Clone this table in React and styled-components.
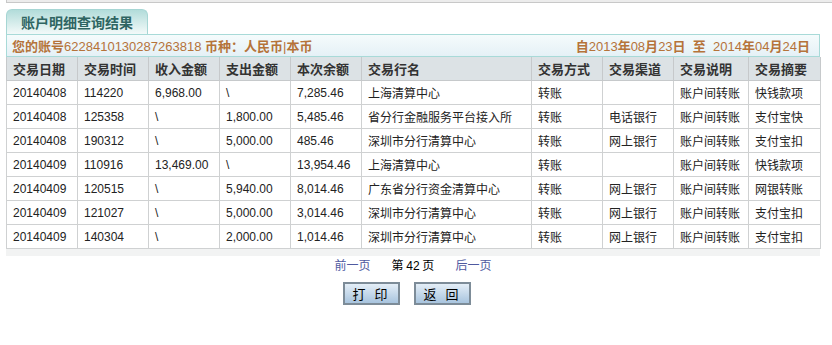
import React from "react";
import styled, { createGlobalStyle } from "styled-components";

const GlobalStyle = createGlobalStyle`
  body {
    margin: 0;
    background: #fff;
    font-family: "Liberation Sans", "Noto Sans CJK SC", sans-serif;
    font-size: 12px;
    color: #222;
  }
`;

const rows = [
  ["20140408", "114220", "6,968.00", "\\", "7,285.46", "上海清算中心", "转账", "", "账户间转账", "快钱款项"],
  ["20140408", "125358", "\\", "1,800.00", "5,485.46", "省分行金融服务平台接入所", "转账", "电话银行", "账户间转账", "支付宝快"],
  ["20140408", "190312", "\\", "5,000.00", "485.46", "深圳市分行清算中心", "转账", "网上银行", "账户间转账", "支付宝扣"],
  ["20140409", "110916", "13,469.00", "\\", "13,954.46", "上海清算中心", "转账", "", "账户间转账", "快钱款项"],
  ["20140409", "120515", "\\", "5,940.00", "8,014.46", "广东省分行资金清算中心", "转账", "网上银行", "账户间转账", "网银转账"],
  ["20140409", "121027", "\\", "5,000.00", "3,014.46", "深圳市分行清算中心", "转账", "网上银行", "账户间转账", "支付宝扣"],
  ["20140409", "140304", "\\", "2,000.00", "1,014.46", "深圳市分行清算中心", "转账", "网上银行", "账户间转账", "支付宝扣"],
];

const headers = ["交易日期", "交易时间", "收入金额", "支出金额", "本次余额", "交易行名", "交易方式", "交易渠道", "交易说明", "交易摘要"];
const widths = [71, 71, 71, 71, 71, 170, 71, 71, 75, 72];

function App() {
  return (
    <>
      <GlobalStyle />
      <TopStrip />
      <Panel>
        <Tab>账户明细查询结果</Tab>
        <InfoBar>
          <span>
            <b>您的账号</b>6228410130287263818 <b>币种：人民币</b>|<b>本币</b>
          </span>
          <span>
            <b>自</b>2013<b>年</b>08<b>月</b>23<b>日</b>&nbsp;&nbsp;<b>至</b>&nbsp;&nbsp;2014<b>年</b>04<b>月</b>24<b>日</b>
          </span>
        </InfoBar>
        <Table>
          <colgroup>
            {widths.map((w, i) => (
              <col key={i} style={{ width: w }} />
            ))}
          </colgroup>
          <thead>
            <tr>
              {headers.map((h) => (
                <Th key={h}>{h}</Th>
              ))}
            </tr>
          </thead>
          <tbody>
            {rows.map((r, i) => (
              <tr key={i}>
                {r.map((c, j) => (
                  <Td key={j} $cjk={j >= 5}>{c}</Td>
                ))}
              </tr>
            ))}
          </tbody>
        </Table>
        <BottomStrip />
        <Pager>
          <PageLink>前一页</PageLink>
          <PageNum>第 <em>42</em> 页</PageNum>
          <PageLink>后一页</PageLink>
        </Pager>
        <Actions>
          <Button>打 印</Button>
          <Button>返 回</Button>
        </Actions>
      </Panel>
    </>
  );
}

const TopStrip = styled.div`
  margin-left: 6px;
  height: 2px;
  background: #ececec;
  border-left: 1px solid #c8c8c8;
  border-bottom: 1px solid #c8c8c8;
`;

const Panel = styled.div`
  width: 814px;
  margin: 6px 0 0 6px;
`;

const Tab = styled.div`
  box-sizing: border-box;
  width: 142px;
  height: 25px;
  padding: 3px 0 0 14px;
  border: 1px solid #a6d6d4;
  border-bottom: none;
  border-radius: 6px 6px 0 0;
  background: linear-gradient(#b2dcda, #e6f4f3 80%, #f2f9f9);
  color: #2f6562;
  font-family: "Noto Sans CJK SC", sans-serif;
  font-weight: bold;
  font-size: 14px;
  line-height: 18px;
`;

const InfoBar = styled.div`
  box-sizing: border-box;
  height: 23px;
  display: flex;
  justify-content: space-between;
  align-items: center;
  padding: 0 9px 0 5px;
  border: 1px solid #a8dad8;
  background: linear-gradient(#f5fbfc, #e5f1f6);
  color: #b5733a;
  font-size: 13px;
  b {
    font-family: "Noto Sans CJK SC", sans-serif;
    font-weight: bold;
  }
`;

const Table = styled.table`
  width: 814px;
  border-collapse: collapse;
  table-layout: fixed;
`;

const Th = styled.th`
  height: 23px;
  padding: 0 0 0 6px;
  text-align: left;
  background: #dce2e5;
  border: 1px solid #c6c9cb;
  border-top: none;
  color: #333;
  font-family: "Noto Sans CJK SC", sans-serif;
  font-size: 13px;
  font-weight: bold;
  white-space: nowrap;
  overflow: hidden;
`;

const Td = styled.td`
  height: 23px;
  padding: 0 0 0 6px;
  border: 1px solid #cfd1d2;
  background: #fff;
  color: #222;
  font-family: ${(p) => (p.$cjk ? '"Noto Sans CJK SC", sans-serif' : '"Liberation Sans", sans-serif')};
  font-size: 12px;
  white-space: nowrap;
  overflow: hidden;
`;

const BottomStrip = styled.div`
  height: 7px;
  background: #f2f3f3;
`;

const Pager = styled.div`
  display: flex;
  justify-content: center;
  align-items: center;
  gap: 21px;
  height: 16px;
  font-size: 12px;
  font-family: "Noto Sans CJK SC", sans-serif;
`;

const PageLink = styled.a`
  color: #4f5a9f;
  cursor: pointer;
`;

const PageNum = styled.span`
  color: #000;
  em {
    font-style: normal;
    font-family: "Liberation Sans", sans-serif;
  }
`;

const Actions = styled.div`
  display: flex;
  justify-content: center;
  gap: 14px;
  margin-top: 10px;
  padding-right: 12px;
`;

const Button = styled.button`
  box-sizing: border-box;
  width: 57px;
  height: 23px;
  padding: 0;
  border: 2px solid #7d8c98;
  background: linear-gradient(#e4eef7, #a8c4de);
  color: #000;
  font-family: "Noto Sans CJK SC", sans-serif;
  font-size: 13px;
  letter-spacing: 3px;
  cursor: pointer;
`;

export default App;
